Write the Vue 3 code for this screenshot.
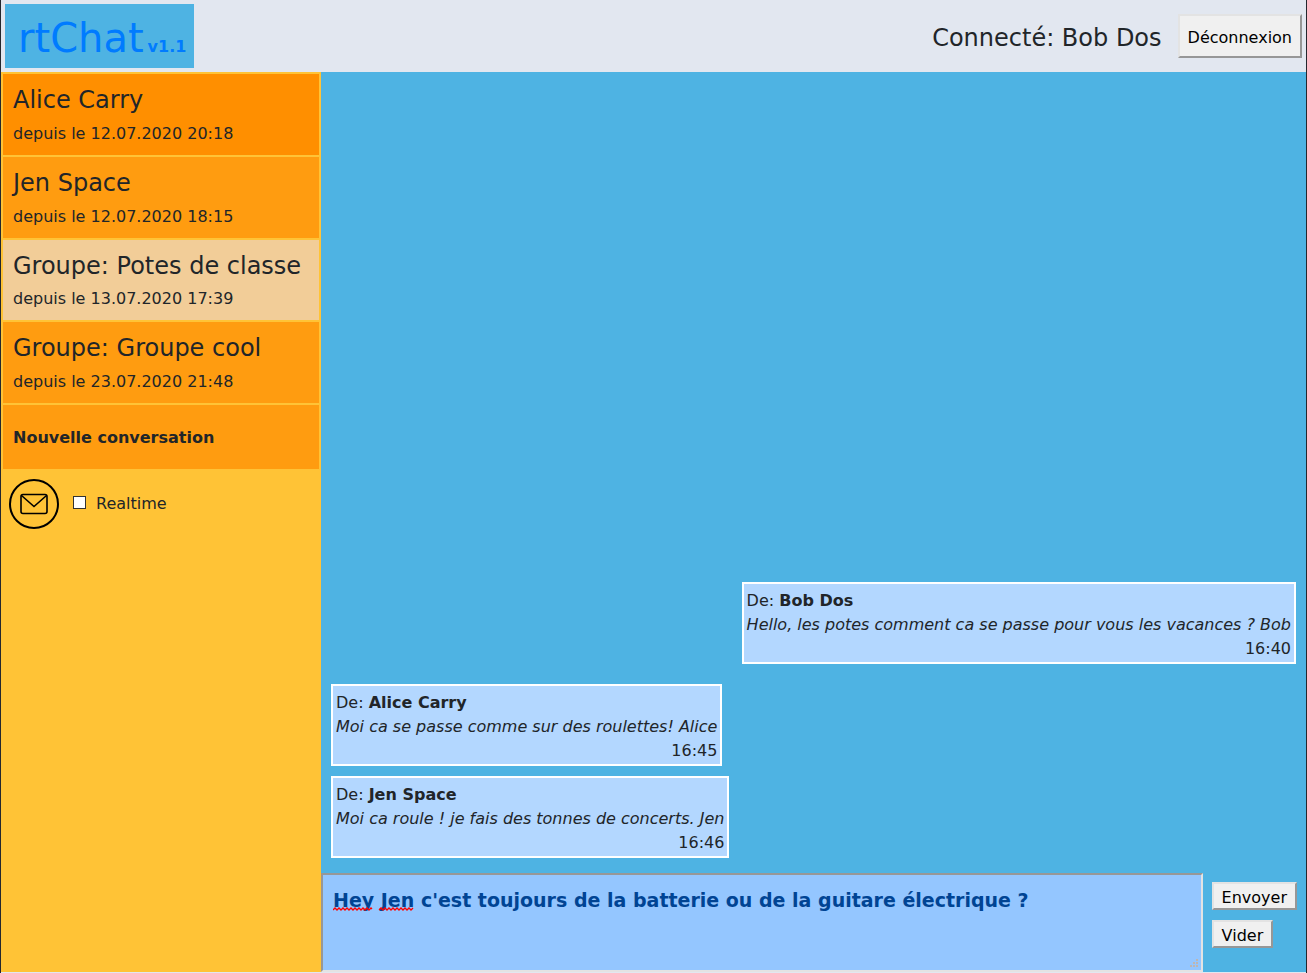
<script setup>
import { ref } from 'vue'

const conversations = [
  { name: 'Alice Carry', since: '12.07.2020 20:18', state: 'unread' },
  { name: 'Jen Space', since: '12.07.2020 18:15', state: '' },
  { name: 'Groupe: Potes de classe', since: '13.07.2020 17:39', state: 'active' },
  { name: 'Groupe: Groupe cool', since: '23.07.2020 21:48', state: '' },
]

const messages = [
  { from: 'Bob Dos', text: 'Hello, les potes comment ca se passe pour vous les vacances ? Bob', time: '16:40', mine: true },
  { from: 'Alice Carry', text: 'Moi ca se passe comme sur des roulettes! Alice', time: '16:45', mine: false },
  { from: 'Jen Space', text: 'Moi ca roule ! je fais des tonnes de concerts. Jen', time: '16:46', mine: false },
]

const draft = ref("Hey Jen c'est toujours de la batterie ou de la guitare électrique ?")
const realtime = ref(false)
</script>

<template>
  <div class="app">
    <header class="topbar">
      <a class="logo" href="#">rtChat<strong class="version">v1.1</strong></a>
      <div class="session">
        <span class="user">Connecté: Bob Dos</span>
        <button type="button" class="btn logout">Déconnexion</button>
      </div>
    </header>

    <div class="body">
      <aside class="sidebar">
        <ul class="list">
          <li v-for="c in conversations" :key="c.name" class="item" :class="c.state">
            <h2 class="name">{{ c.name }}</h2>
            <div class="since">depuis le {{ c.since }}</div>
          </li>
          <li class="item new"><strong>Nouvelle conversation</strong></li>
        </ul>
        <div class="tools">
          <svg class="mail" viewBox="0 0 50 50" fill="none" stroke="#000" aria-hidden="true">
            <circle cx="25" cy="25" r="24" stroke-width="2" />
            <rect x="12" y="15.500" width="26" height="19" rx="2" stroke-width="1.600" />
            <path d="M12.500 16.500 25 27.500 37.500 16.500" stroke-width="1.600" />
          </svg>
          <input id="realtime" v-model="realtime" class="check" type="checkbox" />
          <label for="realtime">Realtime</label>
        </div>
      </aside>

      <main class="chat">
        <section class="messages">
          <article v-for="m in messages" :key="m.time" class="message" :class="{ mine: m.mine }">
            <div>De: <strong>{{ m.from }}</strong></div>
            <em>{{ m.text }}</em>
            <div class="time">{{ m.time }}</div>
          </article>
        </section>
        <form class="composer" @submit.prevent>
          <div class="field">
            <textarea v-model="draft" class="draft" aria-label="Message" spellcheck="false"></textarea>
            <svg class="spelling" width="86" height="5" fill="none" stroke="#f00" stroke-width="1.300" aria-hidden="true">
              <path d="M0 4l2-2 2 2 2-2 2 2 2-2 2 2 2-2 2 2 2-2 2 2 2-2 2 2 2-2 2 2 2-2 2 2 2-2 2 2 2-2 1 1" />
              <path d="M46 4l2-2 2 2 2-2 2 2 2-2 2 2 2-2 2 2 2-2 2 2 2-2 2 2 2-2 2 2 2-2 2 2 2-2" />
            </svg>
          </div>
          <div class="actions">
            <button type="submit" class="btn">Envoyer</button>
            <button type="button" class="btn" @click="draft = ''">Vider</button>
          </div>
        </form>
      </main>
    </div>
  </div>
</template>

<style>
body {
  margin: 0;
  background: #e2e7f0;
}
</style>

<style scoped>
* {
  box-sizing: border-box;
}

.app {
  display: flex;
  flex-direction: column;
  height: 100vh;
  padding-bottom: 1px;
  border: solid #24272e;
  border-width: 0 1px;
  background: #e2e7f0;
  color: #212529;
  font-family: Verdana, "DejaVu Sans", sans-serif;
  font-size: 16px;
  line-height: 24px;
}

.topbar {
  display: flex;
  flex: none;
  align-items: center;
  justify-content: space-between;
  height: 72px;
  padding: 0 4px;
}

.logo {
  display: flex;
  align-items: baseline;
  gap: 4px;
  height: 64px;
  padding: 0 8px 0 13px;
  background: #4eb3e3;
  color: #007bff;
  font-size: 40px;
  line-height: 68px;
  text-decoration: none;
}

.version {
  font-size: 16px;
}

.session {
  display: flex;
  align-items: center;
  gap: 16px;
}

.user {
  padding-top: 4px;
  font-size: 24px;
}

.btn {
  height: 28px;
  padding: 3px 8px 0;
  border: 2px solid;
  border-color: #e3e3e3 #979797 #979797 #e3e3e3;
  background: #f0f0f0;
  color: #000;
  font: inherit;
  line-height: 20px;
}

.logout {
  height: 44px;
}

.body {
  display: flex;
  flex: 1;
  min-height: 0;
}

.sidebar {
  flex: none;
  width: 320px;
  background: #ffc336;
}

.list {
  display: flex;
  flex-direction: column;
  gap: 2px;
  margin: 0;
  padding: 2px 2px 0;
  list-style: none;
}

.item {
  padding: 12px 10px 9px;
  background: #ff9c10;
}

.item.unread {
  background: #ff8f00;
}

.item.active {
  background: #f2cd98;
}

.item.new {
  padding: 21px 10px 19px;
}

.name {
  margin: 0 0 7px;
  font-size: 24px;
  font-weight: 400;
  line-height: 1.2;
}

.tools {
  display: flex;
  align-items: center;
  padding: 10px 8px;
}

.mail {
  width: 50px;
  height: 50px;
}

.check {
  appearance: none;
  width: 13px;
  height: 13px;
  margin: 0 10px 3px 14px;
  border: 1px solid #333;
  background: #fff;
}

.check:checked {
  background: #007bff;
}

.chat {
  display: flex;
  flex: 1;
  flex-direction: column;
  min-width: 0;
  background: #4eb3e3;
}

.messages {
  display: flex;
  flex: 1;
  flex-direction: column;
  align-items: flex-start;
  justify-content: flex-end;
  gap: 10px;
  min-height: 0;
  padding: 0 10px 15px;
}

.message {
  padding: 5px 3px 1px;
  border: 2px solid #fff;
  background: #b3d7ff;
}

.message.mine {
  align-self: flex-end;
  margin-bottom: 10px;
}

.time {
  text-align: right;
}

.composer {
  display: flex;
  flex: none;
}

.field {
  position: relative;
  flex: 1;
  min-width: 0;
}

.draft {
  display: block;
  width: 100%;
  height: 99px;
  padding: 10px;
  border: 2px solid;
  border-color: #979797 #e3e3e3 #e3e3e3 #979797;
  background: #94c6ff;
  color: #004494;
  font: inherit;
  font-size: 19px;
  font-weight: 700;
  line-height: 30px;
}

.draft::-webkit-resizer {
  background:
    linear-gradient(#bfb5b0, #bfb5b0) 10px 4px / 2px 2px no-repeat,
    linear-gradient(#bfb5b0, #bfb5b0) 7px 7px / 2px 2px no-repeat,
    linear-gradient(#bfb5b0, #bfb5b0) 10px 7px / 2px 2px no-repeat,
    linear-gradient(#bfb5b0, #bfb5b0) 4px 10px / 2px 2px no-repeat,
    linear-gradient(#bfb5b0, #bfb5b0) 7px 10px / 2px 2px no-repeat,
    linear-gradient(#bfb5b0, #bfb5b0) 10px 10px / 2px 2px no-repeat;
}

.spelling {
  position: absolute;
  top: 33px;
  left: 12px;
}

.actions {
  display: flex;
  flex: none;
  flex-direction: column;
  align-items: flex-start;
  gap: 10px;
  padding: 9px 9px 0;
}
</style>
